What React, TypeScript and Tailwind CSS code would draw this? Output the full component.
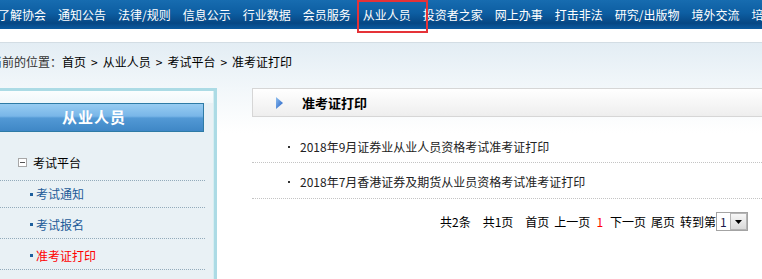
const NAV = [
  "了解协会",
  "通知公告",
  "法律/规则",
  "信息公示",
  "行业数据",
  "会员服务",
  "从业人员",
  "投资者之家",
  "网上办事",
  "打击非法",
  "研究/出版物",
  "境外交流",
  "培训",
];

const SUB = [
  { label: "考试通知", active: false, h: "h-[27px]", pt: "" },
  { label: "考试报名", active: false, h: "h-[31px]", pt: "pt-[3px]" },
  { label: "准考证打印", active: true, h: "h-[31px]", pt: "pt-[3px]" },
];

const NEWS = [
  { title: "2018年9月证券业从业人员资格考试准考证打印", pad: "pt-[22px] pb-[7px]" },
  { title: "2018年7月香港证券及期货从业员资格考试准考证打印", pad: "pt-[11px] pb-[8px]" },
];

const CRUMBS = ["首页", "从业人员", "考试平台", "准考证打印"];

function Arrow() {
  return (
    <svg width="7" height="12" viewBox="0 0 7 12">
      <defs>
        <linearGradient id="arw" x1="0" y1="0" x2="1" y2="1">
          <stop offset="0" stopColor="#8fc0f0" />
          <stop offset="1" stopColor="#1f5cc4" />
        </linearGradient>
      </defs>
      <path d="M0 0 L7 6 L0 12 Z" fill="url(#arw)" />
    </svg>
  );
}

function TopNav() {
  return (
    <nav className="relative h-[29px] bg-[linear-gradient(to_bottom,#176cb0_0%,#0d5ea2_45%,#064784_80%,#0a5aa0_100%)]">
      <ul className="flex h-full items-center gap-3 whitespace-nowrap text-white ml-[-2px] leading-none">
        {NAV.map((n) => (
          <li key={n}>{n}</li>
        ))}
      </ul>
      <div className="absolute left-[357px] top-0 h-[33px] w-[71px] border-2 border-[#e53238]" />
    </nav>
  );
}

function SidePanel() {
  return (
    <aside className="ml-[-24px] w-[241px] shrink-0 border-t-[3px] border-r-[3px] border-[#acdbe5] bg-[#e9f1f5]">
      <div className="h-full border-r border-[#d6eef2]">
        <div className="h-[12px] bg-gradient-to-b from-[#fbfdfe] to-[#f1f7fa]" />
        <div className="ml-2 flex h-[29px] w-[220px] items-center justify-center border border-[#2e7ba6] bg-[linear-gradient(to_bottom,#98ccf2_0%,#78b6e8_45%,#5299d5_52%,#3f87c6_100%)] text-[15px] font-bold tracking-[1px] text-white">
          从业人员
        </div>
        <div className="mr-[8px] mt-[13px]">
          <div className="flex h-[36px] items-center border-b border-dotted border-[#93abbb] pl-[42px] text-black">
            <span className="mr-[6px] flex h-[9px] w-[9px] items-center justify-center border border-[#a7a7a7] bg-white">
              <span className="h-px w-[5px] bg-[#555]" />
            </span>
            考试平台
          </div>
          {SUB.map((s) => (
            <div
              key={s.label}
              className={`flex items-center border-b border-dotted border-[#93abbb] pl-[54px] ${s.h} ${s.pt}`}
            >
              <span className="mr-[3px] h-[3px] w-[3px] bg-[#1d5f9e]" />
              <span className={s.active ? "text-[#ff0000]" : "text-[#1d5a98]"}>{s.label}</span>
            </div>
          ))}
        </div>
      </div>
    </aside>
  );
}

function Pager() {
  return (
    <div className="ml-[188px] mt-[13px] flex h-[19px] items-center whitespace-nowrap text-black">
      <span>共2条</span>
      <span className="ml-[12px]">共1页</span>
      <span className="ml-[12px]">首页</span>
      <span className="ml-[5px]">上一页</span>
      <span className="ml-[6px] text-[#ff0000]">1</span>
      <span className="ml-[7px]">下一页</span>
      <span className="ml-[5px]">尾页</span>
      <span className="ml-[5px]">转到第</span>
      <div className="flex h-[19px] w-[32px] items-center border border-[#a3a3a3] bg-white">
        <span className="w-[13px] pl-[3px] text-[#1a1a4a] leading-none">1</span>
        <span className="flex h-[17px] w-[17px] items-center justify-center border border-[#b5b5b5] bg-gradient-to-b from-[#f7f7f7] to-[#dadada]">
          <svg width="7" height="4" viewBox="0 0 7 4">
            <path d="M0 0 H7 L3.5 4 Z" fill="#000" />
          </svg>
        </span>
      </div>
    </div>
  );
}

function MainContent() {
  return (
    <section className="ml-[35px] w-[520px] shrink-0">
      <div className="flex h-[29px] items-center border border-[#d6d6d6] bg-gradient-to-b from-white to-[#eeeeee] pl-[23px]">
        <Arrow />
        <h2 className="ml-[19px] text-[13px] font-bold text-black">准考证打印</h2>
      </div>
      <ul>
        {NEWS.map((n) => (
          <li
            key={n.title}
            className={`flex items-center border-b border-dotted border-[#c4c4c4] pl-[36px] leading-4 text-[#222] ${n.pad}`}
          >
            <span className="mr-[10px] h-[2px] w-[2px] bg-[#333]" />
            {n.title}
          </li>
        ))}
      </ul>
      <Pager />
    </section>
  );
}

export default function App() {
  return (
    <div
      className="relative h-[279px] w-[762px] overflow-hidden bg-white text-[12px]"
      style={{ fontFamily: '"Noto Sans CJK SC", "Liberation Sans", sans-serif' }}
    >
      <TopNav />
      <div className="h-[13px] bg-white" />
      <div className="h-[237px] border-t border-[#d3dde4] bg-[linear-gradient(to_bottom,#e3edf4_0px,#f2f7fa_45px,#ffffff_90px)]">
        <div className="ml-[-10px] flex h-[45px] pt-[11px] leading-4 whitespace-nowrap">
          <span className="text-[#333]">当前的位置：</span>
          {CRUMBS.map((c, i) => (
            <span key={c} className="text-black">
              {i > 0 && <span className="mx-[5px]">&gt;</span>}
              {c}
            </span>
          ))}
        </div>
        <div className="flex h-[192px]">
          <SidePanel />
          <MainContent />
        </div>
      </div>
    </div>
  );
}
